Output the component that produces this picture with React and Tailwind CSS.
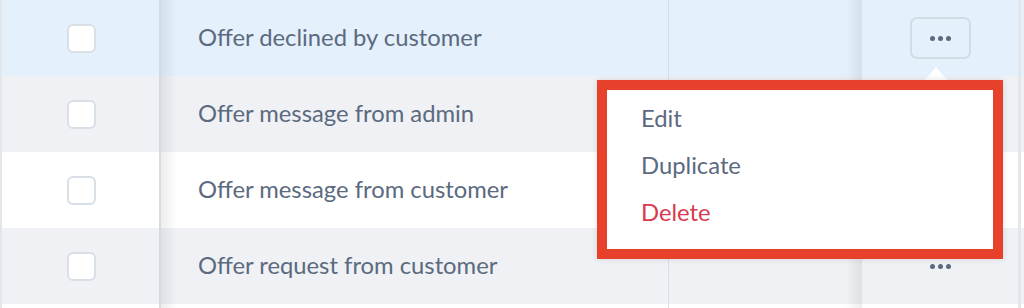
import React from "react";

const rows = [
  { label: "Offer declined by customer", bg: "bg-[#e4f0fc]", active: true },
  { label: "Offer message from admin", bg: "bg-[#eff1f5]" },
  { label: "Offer message from customer", bg: "bg-white" },
  { label: "Offer request from customer", bg: "bg-[#eff1f5]" },
];

function Dots() {
  return (
    <div className="flex items-center gap-[3px]">
      <span className="block h-[5px] w-[5px] rounded-full bg-[#5b6a7e]" />
      <span className="block h-[5px] w-[5px] rounded-full bg-[#5b6a7e]" />
      <span className="block h-[5px] w-[5px] rounded-full bg-[#5b6a7e]" />
    </div>
  );
}

function Row({ label, bg, active, h = "h-[76px]" }) {
  return (
    <div className={`flex ${h} ${bg}`}>
      <div className="flex w-[159px] shrink-0 items-center justify-center border-l-2 border-[#e3e7ec] pl-[1px]">
        {label && (
          <span className="block h-[29px] w-[29px] rounded-[6px] border-2 border-[#d9dfe7] bg-white" />
        )}
      </div>
      <div className="w-[2px] shrink-0 bg-[#d5dbe3]" />
      <div className="relative flex w-[507px] shrink-0 items-center pl-[37px] text-[23.8px] text-[#5b6a7e]">
        <div className="pointer-events-none absolute inset-y-0 left-0 w-[16px] bg-gradient-to-r from-[#00000012] to-transparent" />
        {label}
      </div>
      <div className="relative w-[194px] shrink-0 border-l border-[#d9dfe6]">
        <div className="pointer-events-none absolute inset-y-0 right-0 w-[16px] bg-gradient-to-l from-[#00000012] to-transparent" />
      </div>
      <div className="flex w-[159px] shrink-0 items-center justify-center border-r-[3px] border-[#e3e6eb]">
        {label &&
          (active ? (
            <div className="flex h-[42px] w-[61px] items-center justify-center rounded-[7px] border-2 border-[#d3dbe5]">
              <Dots />
            </div>
          ) : label === "Offer request from customer" ? (
            <Dots />
          ) : null)}
      </div>
    </div>
  );
}

export default function App() {
  return (
    <div
      className="relative h-[308px] w-[1024px] overflow-hidden bg-white"
      style={{ fontFamily: "Lato, 'Open Sans', sans-serif" }}
    >
      {rows.map((r) => (
        <Row key={r.label} {...r} />
      ))}
      <Row label="" bg="bg-white" h="h-[4px]" />

      {/* caret */}
      <div className="absolute left-[925px] top-[67px] h-0 w-0 border-x-[11px] border-b-[13px] border-x-transparent border-b-white" />

      {/* dropdown menu with annotation frame */}
      <div className="absolute left-[597px] top-[80px] h-[179px] w-[406px] border-[10px] border-[#e8412b] bg-white shadow-[0_0_6px_rgba(0,0,0,0.12)]">
        <div className="flex flex-col pl-[34px] pt-[5px] text-[23.8px]">
          <div className="h-[47px] leading-[47px] text-[#5b6a7e]">Edit</div>
          <div className="h-[47px] leading-[47px] text-[#5b6a7e]">Duplicate</div>
          <div className="h-[47px] leading-[47px] text-[#d83a4f]">Delete</div>
        </div>
      </div>
    </div>
  );
}
